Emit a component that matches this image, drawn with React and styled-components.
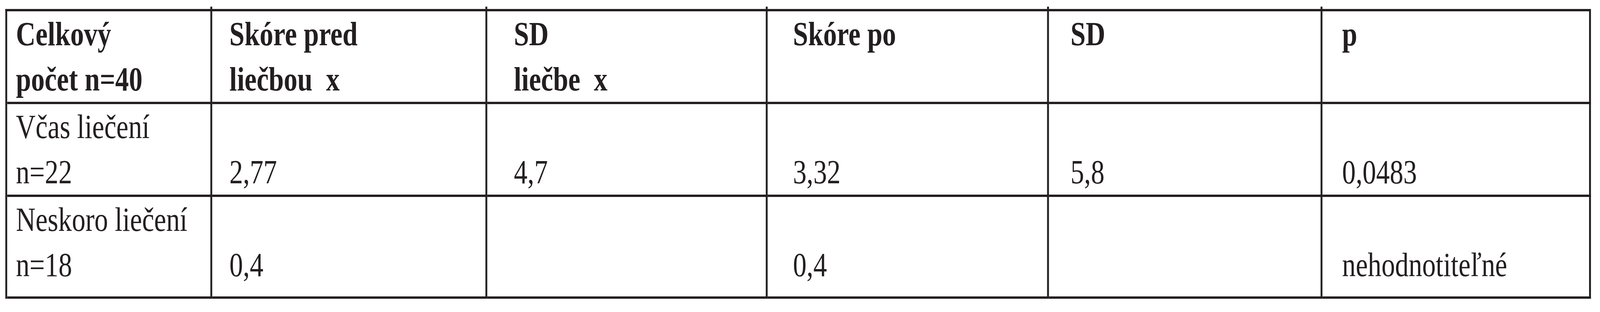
import React, { useEffect, useState } from 'react';
import styled, { createGlobalStyle } from 'styled-components';

const ink = '#231f20';
const DESIGN_WIDTH = 5119;

const GlobalStyle = createGlobalStyle`
  html, body {
    margin: 0;
    padding: 0;
    background: #ffffff;
    overflow: hidden;
  }
  body {
    font-family: "Liberation Serif", "Times New Roman", serif;
    color: ${ink};
  }
`

// the sheet is drawn at the design width and squeezed to the window width
const Page = styled.div`
  width: ${DESIGN_WIDTH}px;
  height: 800px;
  box-sizing: border-box;
  padding: 23px 0 0 17px;
  background: #ffffff;
  transform-origin: 0 0;
`

const Table = styled.table`
  border-collapse: separate;
  border-spacing: 0;
  border-top: 6px solid ${ink};
  border-left: 6px solid ${ink};
  table-layout: fixed;
  width: 5073px;
  font-family: "Liberation Serif", "Times New Roman", serif;
  font-size: 87px;
  line-height: 116px;
  color: ${ink};
`

const Cell = styled.td`
  position: relative;
  box-sizing: border-box;
  vertical-align: top;
  text-align: left;
  padding: 0 0 ${p => p.$padBottom || 0}px ${p => p.$inset}px;
  border-right: 6px solid ${ink};
  border-bottom: 6px solid ${ink};
  font-weight: ${p => (p.$head ? 700 : 400)};
  white-space: pre;

  /* stub of the column rule that pokes up over the top border */
  ${p => p.$tick && `
    &::after {
      content: '';
      position: absolute;
      top: -12px;
      right: -6px;
      width: 6px;
      height: 7px;
      background: ${ink};
    }
  `}
`

const Line = styled.span`
  display: block;
  height: 116px;
`

// widths include each cell's right rule
const columns = [
  { width: 656, inset: 28 },
  { width: 880, inset: 55 },
  { width: 897, inset: 85 },
  { width: 900, inset: 81 },
  { width: 875, inset: 69 },
  { width: 859, inset: 63 },
];

const header = [
  ['Celkový', 'počet n=40'],
  ['Skóre pred', 'liečbou  x'],
  ['SD', 'liečbe  x'],
  ['Skóre po'],
  ['SD'],
  ['p'],
];

const rows = [
  {
    padBottom: 0,
    cells: [
      ['Včas liečení', 'n=22'],
      ['', '2,77'],
      ['', '4,7'],
      ['', '3,32'],
      ['', '5,8'],
      ['', '0,0483'],
    ],
  },
  {
    padBottom: 23,
    cells: [
      ['Neskoro liečení', 'n=18'],
      ['', '0,4'],
      [''],
      ['', '0,4'],
      [''],
      ['', 'nehodnotiteľné'],
    ],
  },
];

const renderLines = lines => lines.map((text, i) => <Line key={i}>{text}</Line>)

const useFitScale = () => {
  const [scale, setScale] = useState(() => window.innerWidth / DESIGN_WIDTH)
  useEffect(() => {
    const onResize = () => setScale(window.innerWidth / DESIGN_WIDTH)
    window.addEventListener('resize', onResize)
    return () => window.removeEventListener('resize', onResize)
  }, [])
  return scale
}

const App = () => {
  const scale = useFitScale()

  return (
    <Page style={{ transform: `scaleX(${scale})` }}>
      <GlobalStyle />
      <Table>
        <colgroup>
          {columns.map((c, i) => <col key={i} style={{ width: c.width }} />)}
        </colgroup>
        <thead>
          <tr>
            {header.map((lines, i) => (
              <Cell
                as="th"
                key={i}
                $head
                $inset={columns[i].inset}
                $tick={i < header.length - 1}
              >
                {renderLines(lines)}
              </Cell>
            ))}
          </tr>
        </thead>
        <tbody>
          {rows.map((row, r) => (
            <tr key={r}>
              {row.cells.map((lines, i) => (
                <Cell key={i} $inset={columns[i].inset} $padBottom={row.padBottom}>
                  {renderLines(lines)}
                </Cell>
              ))}
            </tr>
          ))}
        </tbody>
      </Table>
    </Page>
  )
}

export default App;
